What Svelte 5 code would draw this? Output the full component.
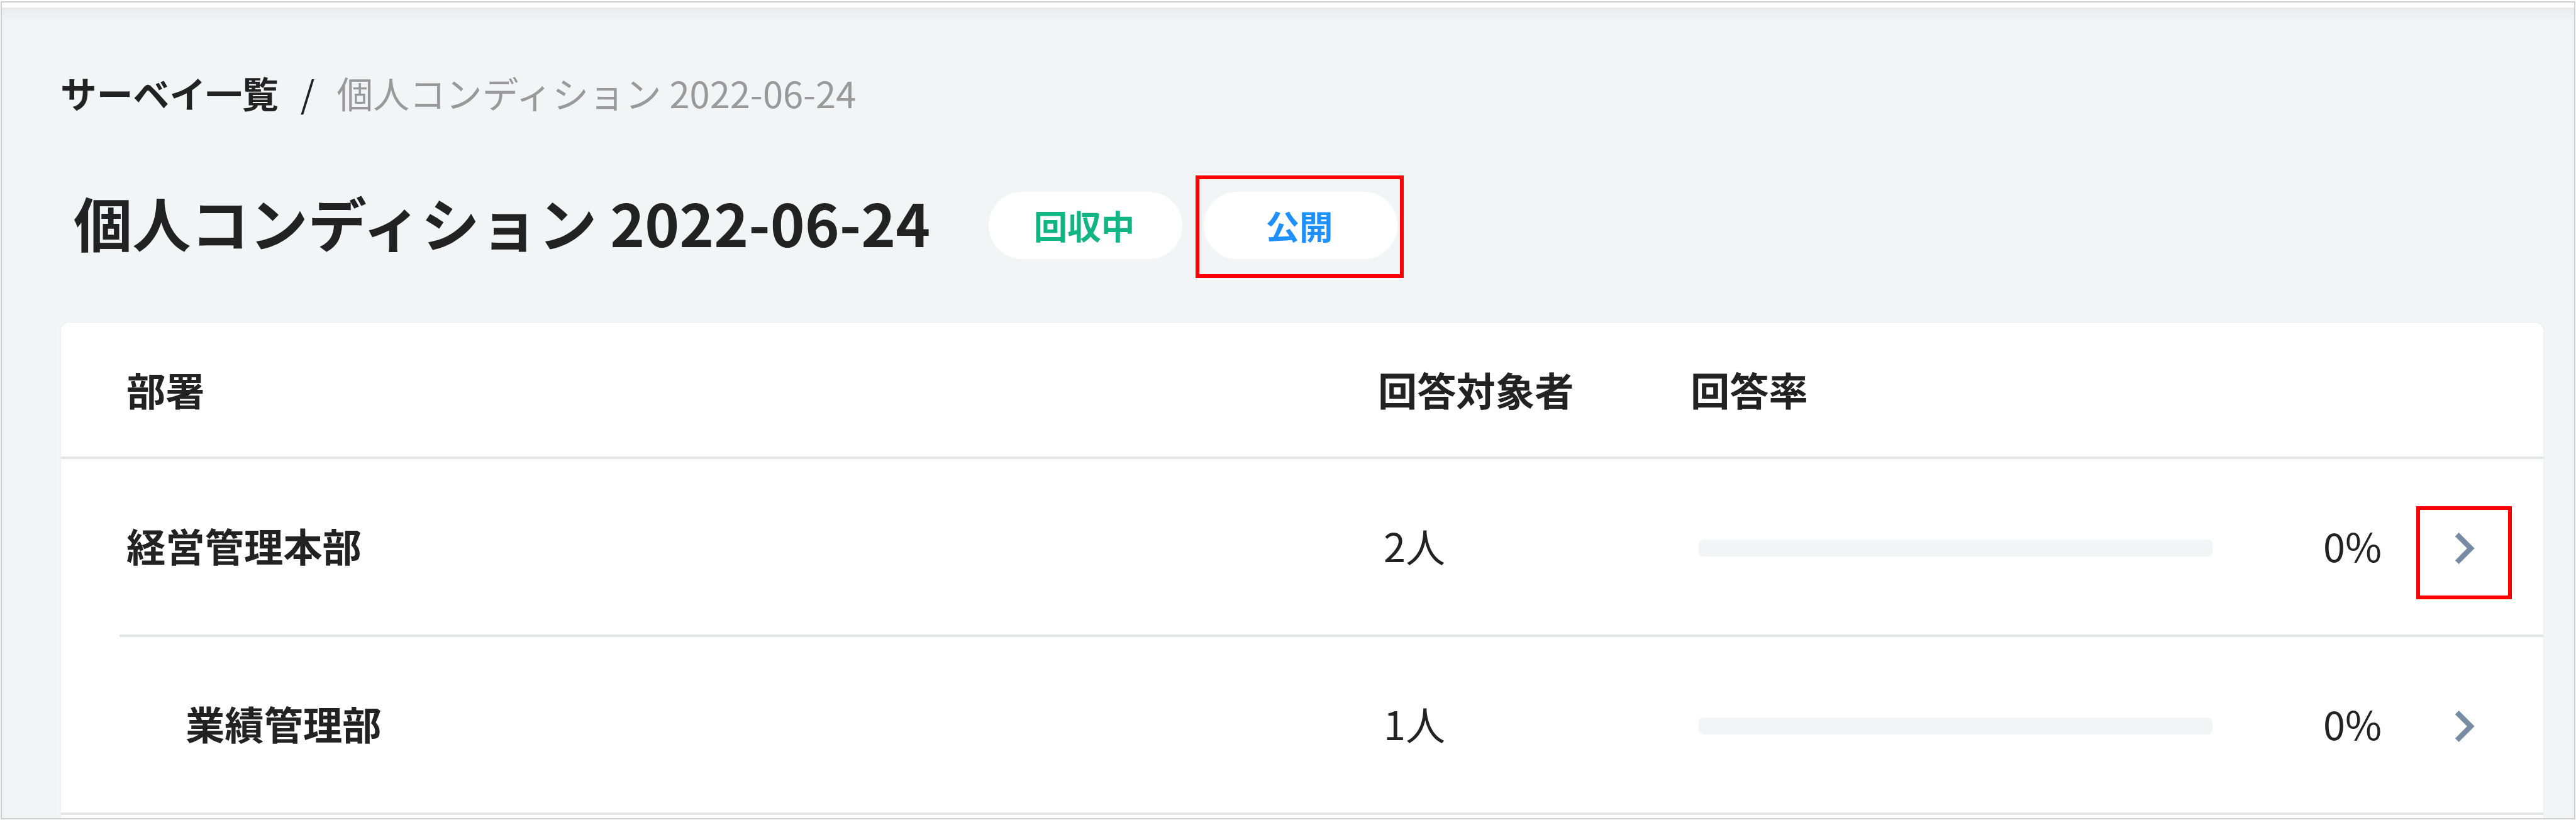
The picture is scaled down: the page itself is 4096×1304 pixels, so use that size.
<script lang="ts">
  interface Department {
    name: string;
    count: number;
    rate: number;
    child: boolean;
    focused: boolean;
  }

  const surveyName = '個人コンディション 2022-06-24';

  const departments: Department[] = [
    { name: '経営管理本部', count: 2, rate: 0, child: false, focused: true },
    { name: '業績管理部', count: 1, rate: 0, child: true, focused: false },
  ];
</script>

<div class="frame">
  <div class="topbar"></div>
  <main class="page">
    <nav class="breadcrumb">
      <a href="#surveys">サーベイ一覧</a>
      <span>/</span>
      <span class="current">{surveyName}</span>
    </nav>

    <div class="heading">
      <h1>{surveyName}</h1>
      <span class="pill collecting">回収中</span>
      <span class="pill public">
        公開
        <i class="marker"></i>
      </span>
    </div>

    <section class="card">
      <div class="row header">
        <div class="name">部署</div>
        <div>回答対象者</div>
        <div>回答率</div>
      </div>
      <div class="divider"></div>

      {#each departments as dept, i}
        <div class="row">
          <div class="name" class:child={dept.child}>{dept.name}</div>
          <div class="count">{dept.count}人</div>
          <div class="rate">
            <div class="bar"><div class="fill" style="width: {dept.rate}%"></div></div>
            <span class="percent">{dept.rate}%</span>
            <a class="detail" href="#detail" aria-label={dept.name}>
              <svg viewBox="0 0 24 24">
                <path d="M10 6L8.59 7.41 13.17 12l-4.58 4.59L10 18l6-6z" />
              </svg>
              {#if dept.focused}
                <i class="marker"></i>
              {/if}
            </a>
          </div>
        </div>
        <div class="divider" class:inset={i < departments.length - 1}></div>
      {/each}
    </section>
  </main>
</div>

<style>
  :global(body) {
    background: #fff;
    overflow: hidden;
  }

  .frame {
    box-sizing: border-box;
    height: 1301px;
    margin: 2px 1px 1px;
    border: 2px solid #cfcfcf;
    background: #f1f5f6;
    color: #222;
    font-family: 'Noto Sans CJK JP', sans-serif;
    overflow: hidden;
  }

  .topbar {
    height: 8px;
    background: #fff;
  }

  .page {
    padding: 93px 49px 0 94px;
    background: linear-gradient(#e8e9eb, #eceff0 8px, #f1f5f6 22px);
  }

  .breadcrumb {
    display: flex;
    gap: 35px;
    height: 84px;
    margin-left: -1px;
    font-size: 57.8px;
    line-height: 84px;
  }

  .breadcrumb a {
    color: inherit;
    font-weight: 700;
    text-decoration: none;
  }

  .breadcrumb .current {
    color: #999;
  }

  .heading {
    display: flex;
    align-items: center;
    height: 140px;
    margin-top: 94px;
    padding-left: 20px;
  }

  h1 {
    width: 1455px;
    margin: 0;
    font-size: 93.2px;
    font-weight: 700;
    line-height: 134px;
    white-space: nowrap;
  }

  .pill {
    position: relative;
    box-sizing: border-box;
    width: 308px;
    height: 107px;
    margin-top: 11px;
    margin-right: 34px;
    padding-right: 4px;
    border-radius: 54px;
    background: #fff;
    font-size: 53.5px;
    font-weight: 700;
    line-height: 105px;
    text-align: center;
  }

  .collecting {
    color: #11b583;
  }

  .public {
    color: #1e90ff;
  }

  .marker {
    position: absolute;
    box-sizing: border-box;
    border: 6px solid #f00;
  }

  .pill .marker {
    top: -26px;
    left: -13px;
    width: 331px;
    height: 163px;
  }

  .card {
    height: 800px;
    margin-top: 90px;
    border-radius: 14px 14px 0 0;
    background: #fff;
    box-shadow: 0 0 4px rgba(0, 0, 0, 0.04);
    font-size: 62.3px;
  }

  .row {
    display: grid;
    grid-template-columns: 2094px 497px 1fr;
    align-items: center;
    height: 279px;
    line-height: 90px;
  }

  .row.header {
    height: 213px;
    font-weight: 700;
  }

  .row.header div {
    padding-bottom: 2px;
  }

  .name {
    padding-left: 104px;
    font-weight: 700;
  }

  .name.child {
    padding-left: 198px;
  }

  .row:not(.header) .name,
  .count,
  .percent {
    padding-bottom: 5px;
  }

  .count {
    padding-left: 9px;
    font-size: 63px;
  }

  .rate {
    display: flex;
    align-items: center;
    padding-left: 13px;
  }

  .bar {
    width: 817px;
    height: 27px;
    margin-top: 4px;
    border-radius: 8px;
    background: #f1f5f6;
    overflow: hidden;
  }

  .fill {
    height: 100%;
    background: #11b583;
  }

  .percent {
    width: 174px;
    margin-left: 176px;
    font-size: 63px;
  }

  .detail {
    position: relative;
    width: 100px;
    height: 100px;
    margin-top: 4px;
  }

  .detail svg {
    display: block;
    width: 100px;
    height: 100px;
    fill: #778ca2;
  }

  .detail .marker {
    top: -17px;
    left: -26px;
    width: 152px;
    height: 148px;
  }

  .divider {
    height: 4px;
    background: #e2e6e9;
  }

  .divider.inset {
    margin-left: 93px;
  }
</style>
